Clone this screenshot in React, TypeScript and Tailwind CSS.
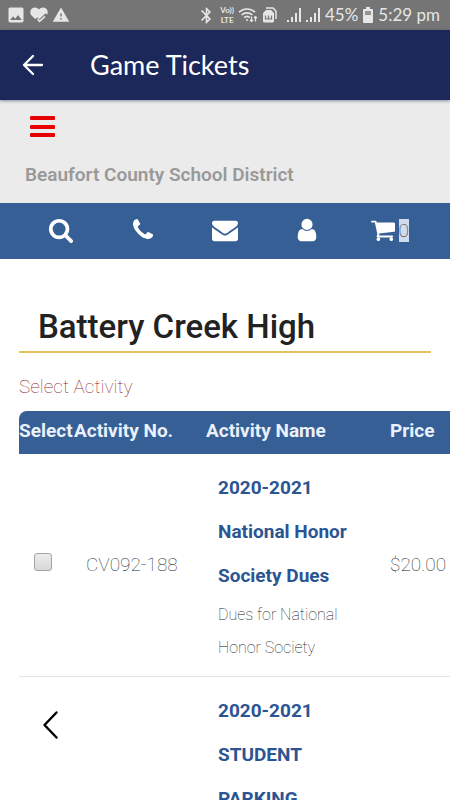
import { MdBluetooth, MdImage, MdWarning } from "react-icons/md";

const activities = [
  {
    id: "CV092-188",
    name: ["2020-2021", "National Honor", "Society Dues"],
    description: ["Dues for National", "Honor Society"],
    price: "$20.00",
  },
  {
    id: "",
    name: ["2020-2021", "STUDENT", "PARKING"],
    description: [],
    price: "",
  },
];

const navItems = [
  {
    label: "Search",
    viewBox: "0 0 1728 1792",
    size: "w-[25px] h-[26px]",
    d: "M1216 832q0-185-131.500-316.500t-316.500-131.500-316.500 131.500-131.500 316.500 131.500 316.500 316.500 131.500 316.500-131.500 131.500-316.500zm512 832q0 52-38 90t-90 38q-54 0-90-38l-343-342q-179 124-399 124-143 0-273.500-55.500t-225-150-150-225-55.500-273.500 55.500-273.500 150-225 225-150 273.500-55.500 273.500 55.500 225 150 150 225 55.500 273.500q0 220-124 399l343 343q37 37 37 90z",
  },
  {
    label: "Call",
    viewBox: "0 0 1408 1792",
    size: "w-5 h-[26px]",
    d: "M1408 1240q0 27-10 70.500t-21 68.500q-21 50-122 106-94 51-186 51-27 0-52.500-3.500t-57.500-12.500-47.500-14.500-55.500-20.500-49-18q-98-35-175-83-128-79-264.500-215.500t-215.500-264.500q-48-77-83-175-3-9-18-49t-20.500-55.500-14.500-47.500-12.500-57.500-3.500-52.500q0-92 51-186 56-101 106-122 25-11 68.500-21t70.500-10q14 0 21 3 18 6 53 76 11 19 30 54t35 63.500 31 53.500q3 4 17.500 25t21.500 35.500 7 28.500q0 20-28.500 50t-62 55-62 53-28.500 46q0 9 5 22.500t8.500 20.500 14 24 11.500 19q76 137 174 235t235 174q2 1 19 11.500t24 14 20.500 8.500 22.500 5q18 0 46-28.500t53-62 55-62 50-28.500q14 0 28.500 7t35.500 21.500 25 17.500q25 15 53.500 31t63.500 35 54 30q70 35 76 53 3 7 3 21z",
  },
  {
    label: "Email",
    viewBox: "0 0 1792 1792",
    size: "w-[26px] h-[26px]",
    d: "M1792 710v794q0 66-47 113t-113 47h-1472q-66 0-113-47t-47-113v-794q44 49 101 87 362 246 497 345 57 42 92.500 65.500t94.500 48 110 24.500h2q51 0 110-24.500t94.500-48 92.500-65.500q170-123 498-345 57-39 100-87zm0-294q0 79-49 151t-122 123q-376 261-468 325-10 7-42.500 30.500t-54 38-52 32.500-57.500 27-50 9h-2q-23 0-50-9t-57.500-27-52-32.500-54-38-42.500-30.500q-91-64-262-182.500t-205-142.500q-62-42-117-115.500t-55-136.500q0-78 41.500-130t118.500-52h1472q65 0 112.500 47t47.500 113z",
  },
  {
    label: "Account",
    viewBox: "0 0 1280 1792",
    size: "w-5 h-[26px]",
    d: "M1280 1399q0 109-62.500 187t-150.500 78h-854q-88 0-150.500-78t-62.500-187q0-85 8.500-160.500t31.500-152 58.500-131 94-89 134.500-34.500q131 128 313 128t313-128q76 0 134.500 34.500t94 89 58.500 131 31.500 152 8.500 160.500zm-256-887q0 159-112.500 271.500t-271.500 112.500-271.500-112.500-112.500-271.500 112.500-271.500 271.500-112.500 271.500 112.500 112.500 271.500z",
  },
  {
    label: "Cart",
    viewBox: "0 0 1664 1792",
    size: "w-6 h-[26px]",
    badge: "0",
    d: "M640 1536q0 52-38 90t-90 38-90-38-38-90 38-90 90-38 90 38 38 90zm896 0q0 52-38 90t-90 38-90-38-38-90 38-90 90-38 90 38 38 90zm128-1088v512q0 24-16.500 42.500t-40.500 21.500l-1044 122q13 60 13 70 0 16-24 64h920q26 0 45 19t19 45-19 45-45 19h-1024q-26 0-45-19t-19-45q0-11 8-31.500t16-36 21.500-40 15.500-29.500l-177-823h-204q-26 0-45-19t-19-45 19-45 45-19h256q16 0 28.500 6.500t19.500 15.500 13 24.500 8 26 5.500 29.500 4.500 26h1201q26 0 45 19t19 45z",
  },
];

function SignalBars() {
  return (
    <svg width="15" height="16" viewBox="0 0 15 16" fill="currentColor">
      <rect x="0" y="13" width="2" height="2" />
      <rect x="4" y="10" width="2" height="5" />
      <rect x="8" y="6" width="2" height="9" />
      <rect x="12" y="1" width="2" height="14" />
    </svg>
  );
}

function StatusBar() {
  return (
    <div className="flex h-[30px] shrink-0 items-center justify-between bg-[#757575] pl-1.5 pr-2.5 text-[#e6e6e6]">
      <div className="flex items-center gap-1">
        <MdImage size={20} />
        <svg width="18" height="17" viewBox="0 0 18 17">
          <path d="M9 16L1.800 8.800C-.5 6.400 0 2.800 2.300 1.300 4.500-.1 7.500.4 9 2.600 10.500.4 13.500-.1 15.700 1.300 18 2.800 18.500 6.400 16.200 8.800z" fill="currentColor" />
          <path d="M6 11.500l3 3 8-7" fill="none" stroke="#757575" strokeWidth="3.500" />
          <path d="M7.500 12l2 2.300 5.500-5" fill="none" stroke="currentColor" strokeWidth="1.600" />
        </svg>
        <MdWarning size={18} />
      </div>

      <div className="flex items-center gap-1">
        <MdBluetooth size={19} />
        <div className="flex flex-col items-center text-[8px] font-bold leading-[10px]">
          <span>Vo))</span>
          <span>LTE</span>
        </div>
        <svg width="20" height="16" viewBox="0 0 20 16" fill="none" stroke="currentColor" strokeWidth="1.700">
          <path d="M1 5.200c4.500-4.300 11.500-4.300 16 0M3.600 8c3-2.900 7.800-2.900 10.800 0M6.200 10.700c1.600-1.500 4-1.500 5.600 0" />
          <circle cx="9" cy="13" r="1" fill="currentColor" stroke="none" />
          <path d="M13.500 9.500v5M12 13l1.500 1.500L15 13M17.500 14.500v-5M16 11l1.500-1.500L19 11" strokeWidth="1.200" />
        </svg>
        <svg width="15" height="16" viewBox="0 0 15 16">
          <path d="M4 1h7l3 3v8" fill="none" stroke="currentColor" strokeWidth="1.500" />
          <path d="M4 3h5l3 3v8a1.500 1.500 0 0 1-1.500 1.500h-8A1.500 1.500 0 0 1 1 14V6z" fill="currentColor" />
          <path d="M3.500 8.500v4M6.500 8.500v4M9.500 8.500v4M3.500 12h6" fill="none" stroke="#757575" strokeWidth="1.200" />
        </svg>
        <div className="ml-1.5 flex items-center gap-1">
          <SignalBars />
          <SignalBars />
        </div>
        <span className="text-[17px] leading-5">45%</span>
        <svg width="12" height="17" viewBox="0 0 12 17">
          <path d="M4 0h4v2h2a1 1 0 0 1 1 1v12a1 1 0 0 1-1 1H2a1 1 0 0 1-1-1V3a1 1 0 0 1 1-1h2z" fill="currentColor" />
          <path d="M3 4h6v4H3z" fill="#949494" />
        </svg>
        <span className="text-[17px] leading-5">5:29 pm</span>
      </div>
    </div>
  );
}

export default function App() {
  return (
    <div className="flex h-screen flex-col overflow-hidden bg-white font-['Roboto',sans-serif]">
      <div className="shrink-0 font-['Lato',sans-serif]">
        <StatusBar />
        <header className="relative flex h-[70px] items-center bg-[#1c275a] pl-[21px] text-white shadow-[0_1px_3px_rgba(28,39,90,0.5)]">
          <button aria-label="Back" className="mr-[46px]">
            <svg width="23" height="22" viewBox="0 0 23 22" fill="none" stroke="currentColor" strokeWidth="2.300" strokeLinecap="round" strokeLinejoin="round">
              <path d="M21 11H3M12 2L3 11l9 9" />
            </svg>
          </button>
          <h1 className="text-[27px] leading-8">Game Tickets</h1>
        </header>
      </div>

      <main className="min-h-0 flex-1 overflow-x-hidden overflow-y-auto [scrollbar-width:none]">
        <section className="bg-[#ebebeb] px-[25px] pt-4 pb-3.5">
          <button aria-label="Menu" className="ml-[5px] flex h-[21px] w-[25px] flex-col justify-between">
            <span className="h-1 w-full rounded-[1px] bg-[#e60000]" />
            <span className="h-1 w-full rounded-[1px] bg-[#e60000]" />
            <span className="h-1 w-full rounded-[1px] bg-[#e60000]" />
          </button>
          <p className="mt-6 text-[19px] font-semibold leading-7 text-[#999999]">Beaufort County School District</p>
        </section>

        <nav className="grid h-14 grid-cols-5 items-center bg-[#365f96] px-[19px] pb-0.5 text-white">
          {navItems.map((item) => (
            <a key={item.label} href="#" aria-label={item.label} className="flex items-center justify-center gap-1">
              <svg viewBox={item.viewBox} className={item.size} fill="currentColor">
                <path d={item.d} />
              </svg>
              {item.badge && (
                <span className="bg-[#cfdcee] text-[19px] font-thin leading-[23px] text-[#222222]">{item.badge}</span>
              )}
            </a>
          ))}
        </nav>

        <section className="pl-[19px]">
          <h2 className="mr-[19px] mt-[46px] border-b-2 border-[#e5c35c] px-[19px] pb-0.5 text-[33px] font-medium leading-[44px] text-[#222222]">
            Battery Creek High
          </h2>
          <p className="mt-5 text-[19px] font-thin leading-7 text-[#8f1f2b]">Select Activity</p>

          <table className="mt-2.5 w-full min-w-[440px] table-fixed border-separate border-spacing-0 text-left text-[19px]">
            <thead>
              <tr className="h-[43px] leading-6 text-[#eaf1fb]">
                <th className="w-[55px] rounded-tl-lg bg-[#365f96] pb-1 font-bold">Select</th>
                <th className="w-[132px] bg-[#365f96] pb-1 font-bold">Activity No.</th>
                <th className="w-[172px] bg-[#365f96] pb-1 font-bold">Activity Name</th>
                <th className="bg-[#365f96] pb-1 pl-3 font-bold">Price</th>
              </tr>
            </thead>
            <tbody>
              {activities.map((activity, i) => (
                <tr key={i}>
                  <td className="border-b border-[#e4e4e4] pb-1.5 pl-[15px] align-middle">
                    {activity.id && (
                      <input
                        type="checkbox"
                        aria-label={`Select ${activity.id}`}
                        className="block size-[18px] appearance-none rounded-[3px] border border-[#a3a3a3] bg-linear-to-b from-[#ececec] to-[#d8d8d8]"
                      />
                    )}
                  </td>
                  <td className="border-b border-[#e4e4e4] pl-3 font-thin text-[#20303a]">{activity.id}</td>
                  <td className="border-b border-[#e4e4e4] px-3 py-3">
                    <div className="font-bold leading-[44px] text-[#2b5592]">
                      {activity.name.map((line) => (
                        <div key={line}>{line}</div>
                      ))}
                    </div>
                    <div className="text-base font-thin leading-[33px] text-[#222222]">
                      {activity.description.map((line) => (
                        <div key={line} className="leading-[33px]">{line}</div>
                      ))}
                    </div>
                  </td>
                  <td className="border-b border-[#e4e4e4] pl-3 font-thin text-[#222222]">{activity.price}</td>
                </tr>
              ))}
            </tbody>
          </table>
        </section>
      </main>

      {/* Floating back button over the page */}
      <button aria-label="Previous page" className="fixed bottom-[60px] left-[42px]">
        <svg width="17" height="30" viewBox="0 0 17 30" fill="none" stroke="black" strokeWidth="2.500" strokeLinecap="round" strokeLinejoin="round">
          <path d="M14.500 2.500L2.500 15l12 12.500" />
        </svg>
      </button>
    </div>
  );
}
